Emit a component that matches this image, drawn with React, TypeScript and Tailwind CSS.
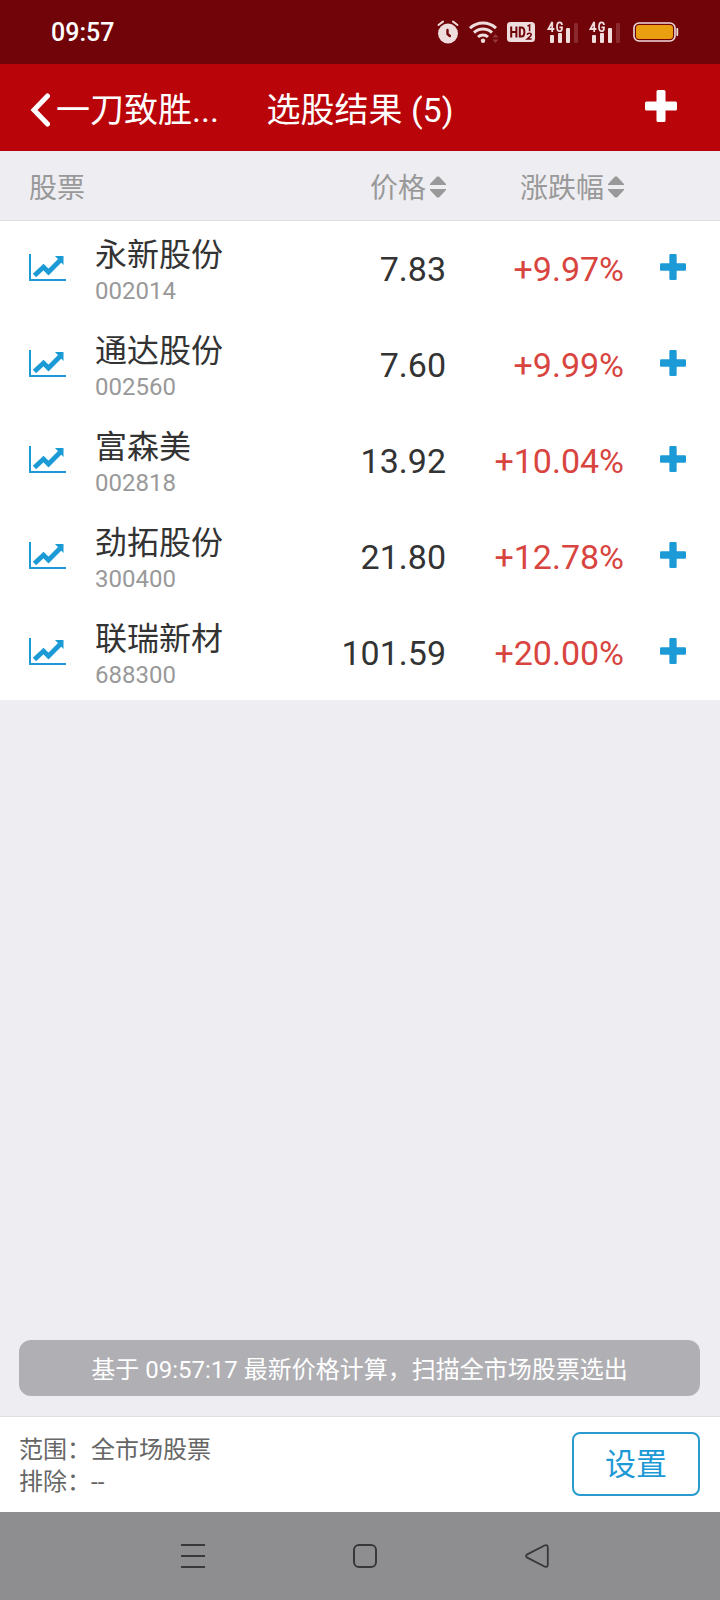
import React from "react";

type Stock = { name: string; code: string; price: string; change: string };

const stocks: Stock[] = [
  { name: "永新股份", code: "002014", price: "7.83", change: "+9.97%" },
  { name: "通达股份", code: "002560", price: "7.60", change: "+9.99%" },
  { name: "富森美", code: "002818", price: "13.92", change: "+10.04%" },
  { name: "劲拓股份", code: "300400", price: "21.80", change: "+12.78%" },
  { name: "联瑞新材", code: "688300", price: "101.59", change: "+20.00%" },
];

function AlarmIcon() {
  return (
    <svg width="22" height="24" viewBox="0 0 22 24" fill="none" aria-hidden="true">
      <circle cx="11" cy="13.5" r="10" fill="#efdcdd" />
      <path d="M1.5 5 6 1.6M20.5 5 16 1.6" stroke="#efdcdd" strokeWidth="2" strokeLinecap="round" />
      <path d="M10.5 10v4l2.4 2" stroke="#700408" strokeWidth="2.4" strokeLinecap="round" strokeLinejoin="round" />
    </svg>
  );
}

function WifiIcon() {
  return (
    <svg width="30" height="24" viewBox="0 0 30 24" fill="none" aria-hidden="true">
      <g stroke="#efdcdd" strokeWidth="3">
        <path d="M1 8.2a19 19 0 0 1 26 0" />
        <path d="M5 12.7a13 13 0 0 1 18 0" />
        <path d="M9 17a7.4 7.4 0 0 1 10 0" />
      </g>
      <circle cx="14" cy="20.8" r="2.2" fill="#efdcdd" />
      <path d="M23.5 17.5h6l-3-3.5zM23.5 19.5h6l-3 3.5z" fill="#94393c" />
    </svg>
  );
}

function HdIcon() {
  return (
    <svg width="28" height="20" viewBox="0 0 28 20" aria-hidden="true">
      <rect width="28" height="20" rx="3.5" fill="#efdcdd" />
      <g fill="none" stroke="#700408" strokeWidth="2">
        <path d="M4.2 4.5v11M9.4 4.5v11M4.2 10h5.2M12.8 5.5v9h1.6q3 0 3-4.5t-3-4.5z" />
        <path d="M20.5 4.2 22.6 3v6.2" strokeWidth="1.5" />
        <path d="M20.2 12.8q.3-1.6 2-1.6 2 0 2 1.6 0 1-4 4.2h4.4" strokeWidth="1.5" />
      </g>
    </svg>
  );
}

function SignalIcon() {
  return (
    <svg width="32" height="24" viewBox="0 0 32 24" aria-hidden="true">
      <g fill="none" stroke="#efdcdd" strokeWidth="1.8">
        <path d="M5.2 12V2L1.4 9h6" />
        <path d="M15 5Q14.8 2.4 12.6 2.4 10 2.4 10 6.8t2.6 4.4q2.4 0 2.4-3.8h-2.6" />
      </g>
      <g fill="#efdcdd">
        <rect x="3" y="15" width="4" height="8" rx="1" />
        <rect x="11" y="13" width="4" height="10" rx="1" />
        <rect x="19" y="8" width="4" height="15" rx="1" />
      </g>
      <rect x="27" y="3" width="4" height="20" rx="1" fill="#8a2a2e" />
    </svg>
  );
}

function BatteryIcon() {
  return (
    <svg width="46" height="20" viewBox="0 0 46 20" fill="none" aria-hidden="true">
      <rect x="1" y="1" width="41" height="18" rx="5" stroke="#efdcdd" strokeWidth="1.6" />
      <rect x="3" y="3" width="37" height="14" rx="3" fill="#e99f10" />
      <rect x="43.4" y="6" width="1.8" height="8" rx=".8" fill="#efdcdd" />
    </svg>
  );
}

function PlusIcon({ size }: { size: number }) {
  return (
    <svg width={size} height={size} viewBox="0 0 32 32" fill="currentColor" aria-hidden="true">
      <path d="M13 0h6a1.5 1.5 0 0 1 1.5 1.5v10h10A1.5 1.5 0 0 1 32 13v6a1.5 1.5 0 0 1-1.5 1.5h-10v10A1.5 1.5 0 0 1 19 32h-6a1.5 1.5 0 0 1-1.5-1.5v-10h-10A1.5 1.5 0 0 1 0 19v-6a1.5 1.5 0 0 1 1.5-1.5h10v-10A1.5 1.5 0 0 1 13 0z" />
    </svg>
  );
}

function ChartIcon() {
  return (
    <svg width="37" height="28" viewBox="0 0 37 28" fill="none" aria-hidden="true">
      <path d="M1 0v26h36" stroke="#1c9ad6" strokeWidth="2" />
      <path d="m5.5 21.5 9-8.5 5 5 11.5-11.5" stroke="#1c9ad6" strokeWidth="4.8" />
      <path d="M26 2h8.5v9z" fill="#1c9ad6" />
    </svg>
  );
}

function SortLabel({ label }: { label: string }) {
  return (
    <button type="button" className="inline-flex items-center gap-1">
      <span className="pt-1">{label}</span>
      <svg width="16" height="22" viewBox="0 0 16 22" fill="currentColor" aria-hidden="true">
        <path d="M0 9V8l7-7.5h2L16 8v1zM0 13v1l7 7.5h2l7-7.5v-1z" />
      </svg>
    </button>
  );
}

export default function App() {
  return (
    <div className="flex min-h-screen flex-col bg-[#eeedf2] font-[Roboto,'Noto_Sans_CJK_SC',sans-serif] font-normal">
      <div className="flex h-16 items-center justify-between bg-[#700408] pr-[41px] pl-[51px]">
        <time className="pt-0.5 text-[25px] font-medium text-white">09:57</time>
        <div className="flex items-center">
          <div className="mr-2.5"><AlarmIcon /></div>
          <div className="mr-2"><WifiIcon /></div>
          <div className="mr-3"><HdIcon /></div>
          <div className="mr-2.5"><SignalIcon /></div>
          <div className="mr-3"><SignalIcon /></div>
          <BatteryIcon />
        </div>
      </div>

      <header className="grid h-[87px] grid-cols-[1fr_auto_1fr] items-center bg-[#b90409] text-[34px] leading-10 text-white">
        <button type="button" className="flex items-center gap-1.5 justify-self-start pt-1 pl-[30px]">
          <svg width="20" height="34" viewBox="0 0 20 34" fill="none" aria-hidden="true">
            <path d="M17.5 3 4 17l13.5 14" stroke="currentColor" strokeWidth="5" strokeLinecap="round" />
          </svg>
          <span>一刀致胜...</span>
        </button>
        <h1 className="pt-1">选股结果 (5)</h1>
        <button type="button" aria-label="添加" className="justify-self-end pr-[43px] pb-1">
          <PlusIcon size={32} />
        </button>
      </header>

      <main className="flex flex-1 flex-col">
        <table className="w-full table-fixed border-collapse bg-white">
          <colgroup>
            <col className="w-[95px]" />
            <col />
            <col className="w-[150px]" />
            <col className="w-[178px]" />
            <col className="w-[96px]" />
          </colgroup>
          <thead>
            <tr className="h-[69px] border-b border-[#dfdfe2] bg-[#eeedf2] text-[28px] leading-8 text-[#999999]">
              <th colSpan={2} className="pt-2 pl-[29px] text-left font-normal">股票</th>
              <th className="pt-1 text-right font-normal"><SortLabel label="价格" /></th>
              <th className="pt-1 text-right font-normal"><SortLabel label="涨跌幅" /></th>
              <th></th>
            </tr>
          </thead>
          <tbody>
            {stocks.map((s) => (
              <tr key={s.code} className="h-24">
                <td className="pl-[29px]"><ChartIcon /></td>
                <td className="pt-1.5">
                  <div className="text-[32px] leading-10 text-[#333333]">{s.name}</div>
                  <div className="text-2xl leading-8 text-[#999999]">{s.code}</div>
                </td>
                <td className="pt-0.5 text-right text-[34px] text-[#333333]">{s.price}</td>
                <td className="pt-0.5 text-right text-[34px] text-[#d8453f]">{s.change}</td>
                <td className="pb-0.5 pl-9">
                  <button type="button" aria-label={`添加${s.name}`} className="block text-[#1c9ad6]">
                    <PlusIcon size={26} />
                  </button>
                </td>
              </tr>
            ))}
          </tbody>
        </table>
        <p className="mt-auto mr-5 mb-5 ml-[19px] rounded-xl bg-[#b0afb4] pt-3.5 pb-2.5 text-center text-2xl leading-8 text-white">
          基于 09:57:17 最新价格计算，扫描全市场股票选出
        </p>
      </main>

      <footer className="flex h-24 items-center justify-between border-t border-[#dfdfe2] bg-white pr-5 pb-0.5 pl-[19px]">
        <dl className="grid grid-cols-[auto_1fr] pt-1 text-2xl leading-8 text-[#666666]">
          <dt>范围：</dt>
          <dd>全市场股票</dd>
          <dt>排除：</dt>
          <dd>--</dd>
        </dl>
        <button type="button" className="h-16 w-32 rounded-lg border-2 border-[#2a9bcf] pt-0.5 text-[31px] leading-10 text-[#1c9ad6]">
          设置
        </button>
      </footer>

      <nav className="flex h-22 items-center justify-center gap-[148px] bg-[#8e8e90] pl-2.5 text-[#38383a]">
        <button type="button" aria-label="菜单">
          <svg width="24" height="24" viewBox="0 0 24 24" fill="none" stroke="currentColor" strokeWidth="2" aria-hidden="true">
            <path d="M0 1h24M0 12h24M0 23h24" />
          </svg>
        </button>
        <button type="button" aria-label="主页">
          <svg width="24" height="24" viewBox="0 0 24 24" fill="none" stroke="currentColor" strokeWidth="2" aria-hidden="true">
            <rect x="1" y="1" width="22" height="22" rx="5" />
          </svg>
        </button>
        <button type="button" aria-label="返回">
          <svg width="24" height="24" viewBox="0 0 24 24" fill="none" stroke="currentColor" strokeWidth="1.8" strokeLinejoin="round" aria-hidden="true">
            <path d="M1.8 10.6 20 1.3q2.8-.8 2.8 2v17.4q0 2.8-2.8 2L1.8 13.4q-1.6-1.4 0-2.8z" />
          </svg>
        </button>
      </nav>
    </div>
  );
}
